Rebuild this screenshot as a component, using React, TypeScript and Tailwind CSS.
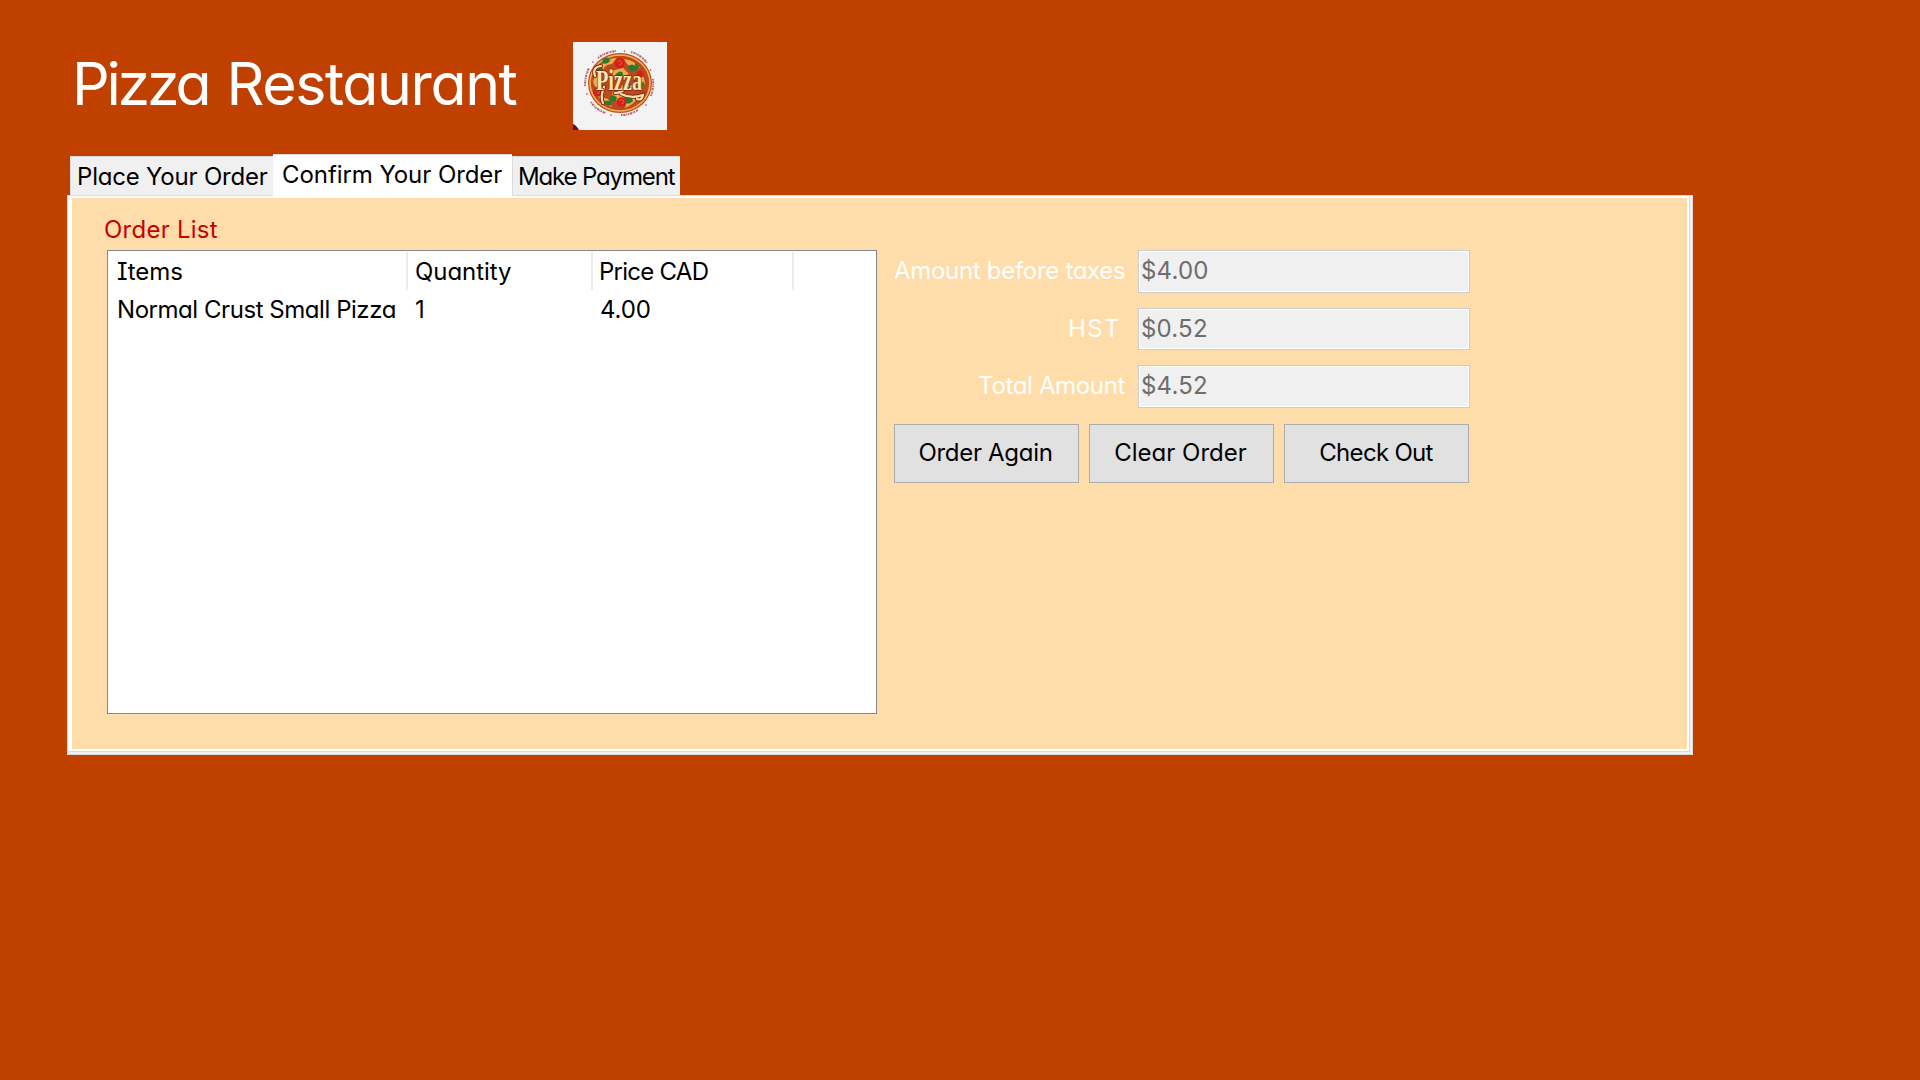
import type { ReactNode } from "react";

const columns = [
  { title: "Items", width: "w-[300px] pl-[9px]", tracking: "tracking-[-0.1px]" },
  { title: "Quantity", width: "w-[185px] pl-[7px]", tracking: "tracking-[-0.05px]" },
  { title: "Price CAD", width: "w-[201px] pl-[6px]", tracking: "tracking-[-0.75px]" },
];

const amounts = [
  { label: "Amount before taxes", value: "$4.00", cls: "tracking-[-0.3px] pr-[13px]" },
  { label: "HST", value: "$0.52", cls: "tracking-[1.4px] pr-[17px]" },
  { label: "Total Amount", value: "$4.52", cls: "tracking-[-0.35px] pr-[13px]" },
];

const actions = [
  { label: "Order Again", cls: "tracking-[-0.3px] pr-[2px]" },
  { label: "Clear Order", cls: "tracking-[0px] pr-[2px]" },
  { label: "Check Out", cls: "tracking-[-0.7px] pr-[1px]" },
];

function PizzaLogo() {
  return (
    <svg width="94" height="88" viewBox="0 0 94 88" className="block">
      <rect width="94" height="88" fill="#f3f3f3" />
      <path d="M0 82 Q3 83 6 88 H0Z" fill="#651212" />
      <ellipse cx="47" cy="41" rx="32" ry="30" fill="#c64a16" />
      <ellipse cx="47" cy="41" rx="30.8" ry="28.8" fill="#efb45e" />
      <ellipse cx="47" cy="41" rx="29.2" ry="27.2" fill="#bd4a1c" />
      <g fill="#eaaa50">
        <path d="M28 23q8-8 16-7l-5 6q-7 0-9 6zM51 17q10 1 16 9l-7 1q-7-5-9-10zM20 39q2-6 8-8l-2 15q-5 0-6-7zM65 30q7 4 7 12l-7-2zM25 54l10 3 4 8q-9-3-14-11zM54 59l13-6q-5 9-15 13zM40 48l12 4-4 9-9-5zM38 29l12-3 6 6-14 5z" />
      </g>
      <g fill="#2b7a30">
        <path d="M30 17q6-4 7 2q-3 4-8 2zM42 33q5-6 8-2q0 6-7 5zM55 24q5-4 10 2q-1 5-8 3zM25 25q4-3 5 3q-2 4-6 1zM66 49q5-5 5-9q-6 0-7 6zM37 55q4-4 7 1q-1 5-7 3zM53 56q6-2 7 3q-5 5-8 1zM30 60q5-3 9 1q-1 4-5 2zM62 21q4 1 4 5q-4 0-4-5z" />
      </g>
      <g fill="#d51f18">
        <circle cx="46.5" cy="21" r="5.2" />
        <circle cx="67" cy="32" r="3.5" />
        <circle cx="24.5" cy="50" r="4.4" />
        <circle cx="48.5" cy="60" r="4.8" />
      </g>
      <g fill="none" stroke="#ef6a3c" strokeWidth="0.8">
        <path d="M44 20q2-3 5 0q0 3-3 3M22.5 49q2-2 4 0q0 3-3 2M46 59q2-3 5 0q0 3-3 3" />
      </g>
      <g fill="none" stroke="#7c2711" strokeWidth="4" strokeLinecap="round">
        <path d="M22 34q-3-9 6-10M30 61q-3-6 1-16M42 51q7 0 13-7M48 52q10 5 22 1q-1 6-6 4" />
      </g>
      <g fill="none" stroke="#fae5ae" strokeWidth="2.2" strokeLinecap="round">
        <path d="M22 34q-3-9 6-10M30 61q-3-6 1-16M42 51q7 0 13-7M48 52q10 5 22 1q-1 6-6 4" />
      </g>
      <text
        x="23"
        y="48"
        fontFamily="'Liberation Serif', serif"
        fontWeight="700"
        fill="#fae5ae"
        stroke="#7c2711"
        strokeWidth="1.6"
        paintOrder="stroke"
        fontSize="29"
        textLength="46"
        lengthAdjust="spacingAndGlyphs"
      >
        Pizza
      </text>
      <g fill="none" stroke="#b4666a" strokeWidth="2" strokeDasharray="1.5 0.8 2.3 0.7 0.8 0.6">
        <path d="M25 16q8-6 18-7M58 10q9 2 16 11M80 37q1 8-2 17M18 60q5 8 15 11M48 73q9 0 17-5M12 44q0-10 4-18" />
      </g>
      <g fill="#ae3b3d">
        <circle cx="51.5" cy="9" r="0.8" />
        <circle cx="77.5" cy="28" r="0.8" />
        <circle cx="73" cy="63" r="0.8" />
        <circle cx="38" cy="73" r="0.8" />
        <circle cx="14" cy="52" r="0.8" />
        <circle cx="20" cy="20" r="0.8" />
      </g>
    </svg>
  );
}

function Tab({ className, children }: { className: string; children: ReactNode }) {
  return (
    <button className={`shrink-0 whitespace-nowrap border-t border-[#dadada] text-left leading-8 ${className}`}>
      {children}
    </button>
  );
}

export default function App() {
  return (
    <div className="h-[1080px] w-[1920px] overflow-hidden bg-[#c04000] text-[24px] leading-8 text-black [font-family:'Comic_Sans_MS',Inter,sans-serif] [font-feature-settings:'cv11','cv08']">
      <header className="flex h-[154px] items-start pl-[72px]">
        <h1 className="mt-[54px] w-[500.5px] whitespace-nowrap text-[59px] leading-[60px] tracking-[-1.4px] text-white [word-spacing:3px]">
          <span className="tracking-[-3.2px]">Pizza</span> Restaurant
        </h1>
        <div className="mt-[42px]">
          <PizzaLogo />
        </div>
      </header>

      <nav className="flex h-[41px] items-end pl-[70px]">
        <Tab className="h-[39px] w-[203px] border-l bg-[#f0f0f0] pl-[6px] pt-[2px] tracking-[-0.2px]">Place Your Order</Tab>
        <Tab className="z-10 -mb-[2px] h-[43px] w-[239px] bg-white pl-[9px] pb-[3px] tracking-[-0.07px]">Confirm Your Order</Tab>
        <Tab className="h-[39px] w-[168px] border-l bg-[#f0f0f0] pl-[5px] pt-[2px] tracking-[-1.15px]">Make Payment</Tab>
      </nav>

      <section className="ml-[67px] h-[560px] w-[1626px] border border-[#dcdcdc] bg-[#f0f0f0] pb-[2px] pr-[2px]">
        <div className="h-full border-b border-r border-[#d9d9d9] bg-white pb-[2px] pl-[4px] pr-[2px] pt-[2px]">
          <div className="flex h-full bg-[#ffddab]">
            <div className="ml-[35px] w-[770px] pt-[16px]">
              <h2 className="-ml-[3px] h-[36px] whitespace-nowrap tracking-[0.25px] text-[#c80000]">Order List</h2>
              <div className="h-[464px] border border-[#828790] bg-white">
                <div className="flex h-[39px] pt-[1px]">
                  {columns.map((c) => (
                    <div key={c.title} className={`h-[38px] shrink-0 border-r-2 border-[#ebebeb] pt-[4px] ${c.width} ${c.tracking}`}>
                      {c.title}
                    </div>
                  ))}
                </div>
                <div className="flex h-[38px] whitespace-nowrap pt-[4px]">
                  <div className="w-[300px] pl-[9px] tracking-[-0.45px]">Normal Crust Small Pizza</div>
                  <div className="w-[185px] pl-[7px]">1</div>
                  <div className="pl-[7px] tracking-[-0.1px]">4.00</div>
                </div>
              </div>
            </div>

            <div className="ml-[17px] mt-[52px] w-[576px]">
              <div className="flex flex-col gap-[15px]">
                {amounts.map((a) => (
                  <div key={a.label} className="flex h-[42.5px]">
                    <label className={`w-[244px] shrink-0 whitespace-nowrap pt-[5px] text-right text-white ${a.cls}`}>{a.label}</label>
                    <div className="w-[332px] border border-[#cccccc] bg-white p-px">
                      <div className="h-full bg-[#f0f0f0] pl-[1px] pt-[3px] tracking-[0.2px] text-[#6d6d6d]">{a.value}</div>
                    </div>
                  </div>
                ))}
              </div>
              <div className="mt-[16px] flex gap-[10px]">
                {actions.map((b) => (
                  <button key={b.label} className={`h-[59px] w-[185px] shrink-0 whitespace-nowrap border border-[#adadad] bg-[#e1e1e1] ${b.cls}`}>
                    {b.label}
                  </button>
                ))}
              </div>
            </div>
          </div>
        </div>
      </section>
    </div>
  );
}
